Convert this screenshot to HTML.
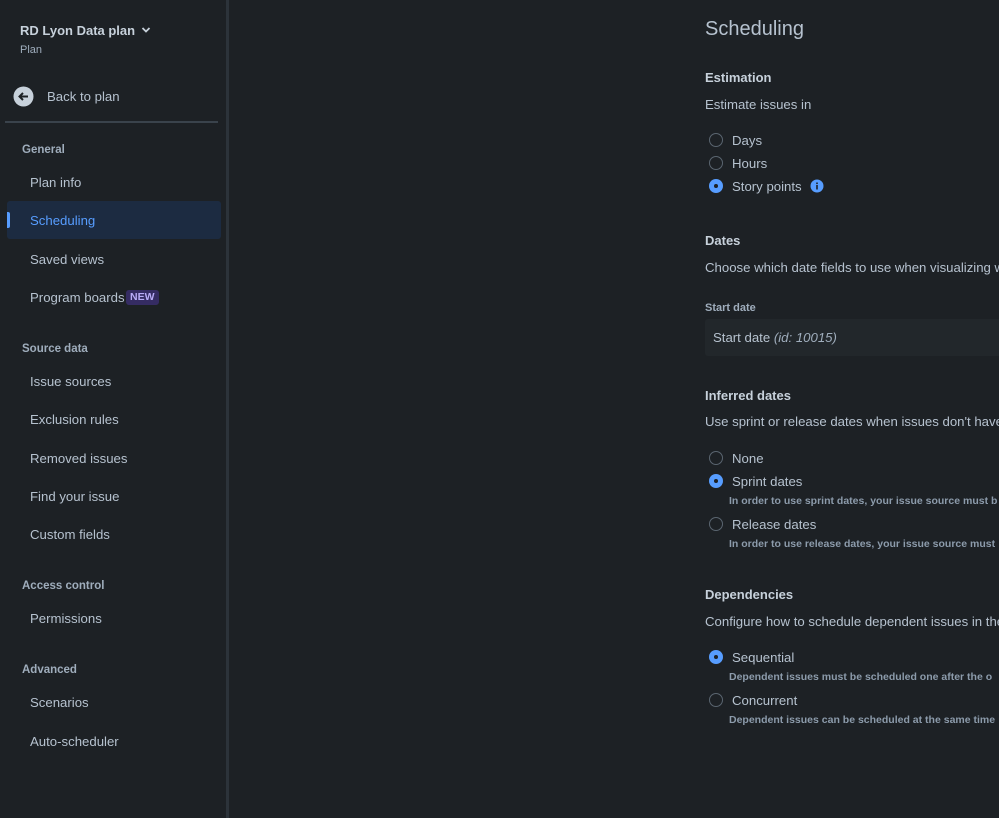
<!DOCTYPE html>
<html><head><meta charset="utf-8"><style>
*{margin:0;padding:0;box-sizing:border-box}
body{width:999px;height:816px;background:#1d2125;font-family:"Liberation Sans",sans-serif;color:#b6c2cf;position:relative;overflow:hidden;font-size:13.2px}
#w{position:absolute;left:0;top:1px;width:999px;height:816px}
.t{position:absolute;height:20px;line-height:20px;white-space:nowrap}
.h{font-weight:bold;font-size:13px;color:#c7d1db}
.s{font-weight:bold;font-size:11.5px;color:#9fadbc}
.c{font-weight:bold;font-size:10.5px;color:#8c9bab}
.side{position:absolute;left:0;top:-1px;width:226px;height:818px;background:#1d2125}
.bar{position:absolute;left:226px;top:-1px;width:3px;height:818px;background:#2c333a}
.r{position:absolute;width:14px;height:14px;border-radius:50%;border:1.5px solid #5a6570;background:#1d2125}
.r.on{border:none;background:#579dff}
.r.on::after{content:"";position:absolute;left:5px;top:5px;width:4px;height:4px;border-radius:50%;background:#1d2125}
</style></head><body><div id="w">
<div class="side"></div><div class="bar"></div>
<div class="t h" style="left:20px;top:20px">RD Lyon Data plan</div>
<svg style="position:absolute;left:141px;top:25px" width="10" height="8"><path d="M1.5 2l3.5 3.5L8.5 2" stroke="#c7d1db" stroke-width="1.8" fill="none"/></svg>
<div class="t" style="left:20px;top:39px;font-size:11px;color:#9fadbc">Plan</div>
<svg style="position:absolute;left:13px;top:85px" width="21" height="21"><circle cx="10.5" cy="10.5" r="10" fill="#c7d1db"/><path d="M15 10.5H7M10 7l-3.5 3.5L10 14" stroke="#1d2125" stroke-width="2" fill="none"/></svg>
<div class="t" style="left:47px;top:86px">Back to plan</div>
<div style="position:absolute;left:5px;top:120px;width:213px;height:2px;background:#3a434c"></div>
<div class="t s" style="left:22px;top:139px">General</div>
<div class="t" style="left:30px;top:172px">Plan info</div>
<div style="position:absolute;left:7px;top:200px;width:214px;height:38px;background:#1c2b41;border-radius:3px"></div>
<div style="position:absolute;left:7px;top:211px;width:3px;height:16px;background:#579dff;border-radius:0 2px 2px 0"></div>
<div class="t" style="left:30px;top:210px;color:#579dff">Scheduling</div>
<div class="t" style="left:30px;top:249px">Saved views</div>
<div class="t" style="left:30px;top:287px">Program boards</div>
<div class="t" style="left:126px;top:289px;height:15px;line-height:15px;padding:0 4px;background:#352c63;color:#b8acf6;font-weight:bold;font-size:10.5px;border-radius:3px">NEW</div>
<div class="t s" style="left:22px;top:338px">Source data</div>
<div class="t" style="left:30px;top:371px">Issue sources</div>
<div class="t" style="left:30px;top:409px">Exclusion rules</div>
<div class="t" style="left:30px;top:448px">Removed issues</div>
<div class="t" style="left:30px;top:486px">Find your issue</div>
<div class="t" style="left:30px;top:524px">Custom fields</div>
<div class="t s" style="left:22px;top:575px">Access control</div>
<div class="t" style="left:30px;top:608px">Permissions</div>
<div class="t s" style="left:22px;top:659px">Advanced</div>
<div class="t" style="left:30px;top:692px">Scenarios</div>
<div class="t" style="left:30px;top:731px">Auto-scheduler</div>

<div class="t" style="left:705px;top:15px;height:26px;line-height:26px;font-size:20px;color:#b6c2cf">Scheduling</div>
<div class="t h" style="left:705px;top:67px">Estimation</div>
<div class="t" style="left:705px;top:94px">Estimate issues in</div>
<div class="r" style="left:709px;top:132px"></div><div class="t" style="left:732px;top:130px">Days</div>
<div class="r" style="left:709px;top:155px"></div><div class="t" style="left:732px;top:153px">Hours</div>
<div class="r on" style="left:709px;top:178px"></div><div class="t" style="left:732px;top:176px">Story points</div>
<svg style="position:absolute;left:810px;top:178px" width="14" height="14"><circle cx="7" cy="7" r="6.5" fill="#579dff"/><rect x="6.2" y="6" width="1.6" height="4.5" fill="#1d2125"/><rect x="6.2" y="3.5" width="1.6" height="1.6" fill="#1d2125"/></svg>
<div class="t h" style="left:705px;top:230px">Dates</div>
<div class="t" style="left:705px;top:257px">Choose which date fields to use when visualizing w</div>
<div class="t s" style="left:705px;top:297px;font-size:11px">Start date</div>
<div style="position:absolute;left:705px;top:318px;width:300px;height:37px;background:#22272b;border-radius:3px"></div>
<div class="t" style="left:713px;top:327px">Start date <i style="color:#9fadbc">(id: 10015)</i></div>
<div class="t h" style="left:705px;top:385px">Inferred dates</div>
<div class="t" style="left:705px;top:411px">Use sprint or release dates when issues don't have</div>
<div class="r" style="left:709px;top:450px"></div><div class="t" style="left:732px;top:448px">None</div>
<div class="r on" style="left:709px;top:473px"></div><div class="t" style="left:732px;top:471px">Sprint dates</div>
<div class="t c" style="left:729px;top:490px">In order to use sprint dates, your issue source must b</div>
<div class="r" style="left:709px;top:516px"></div><div class="t" style="left:732px;top:514px">Release dates</div>
<div class="t c" style="left:729px;top:533px">In order to use release dates, your issue source must</div>
<div class="t h" style="left:705px;top:584px">Dependencies</div>
<div class="t" style="left:705px;top:611px">Configure how to schedule dependent issues in the</div>
<div class="r on" style="left:709px;top:649px"></div><div class="t" style="left:732px;top:647px">Sequential</div>
<div class="t c" style="left:729px;top:666px">Dependent issues must be scheduled one after the o</div>
<div class="r" style="left:709px;top:692px"></div><div class="t" style="left:732px;top:690px">Concurrent</div>
<div class="t c" style="left:729px;top:709px">Dependent issues can be scheduled at the same time</div>
</div></body></html>
